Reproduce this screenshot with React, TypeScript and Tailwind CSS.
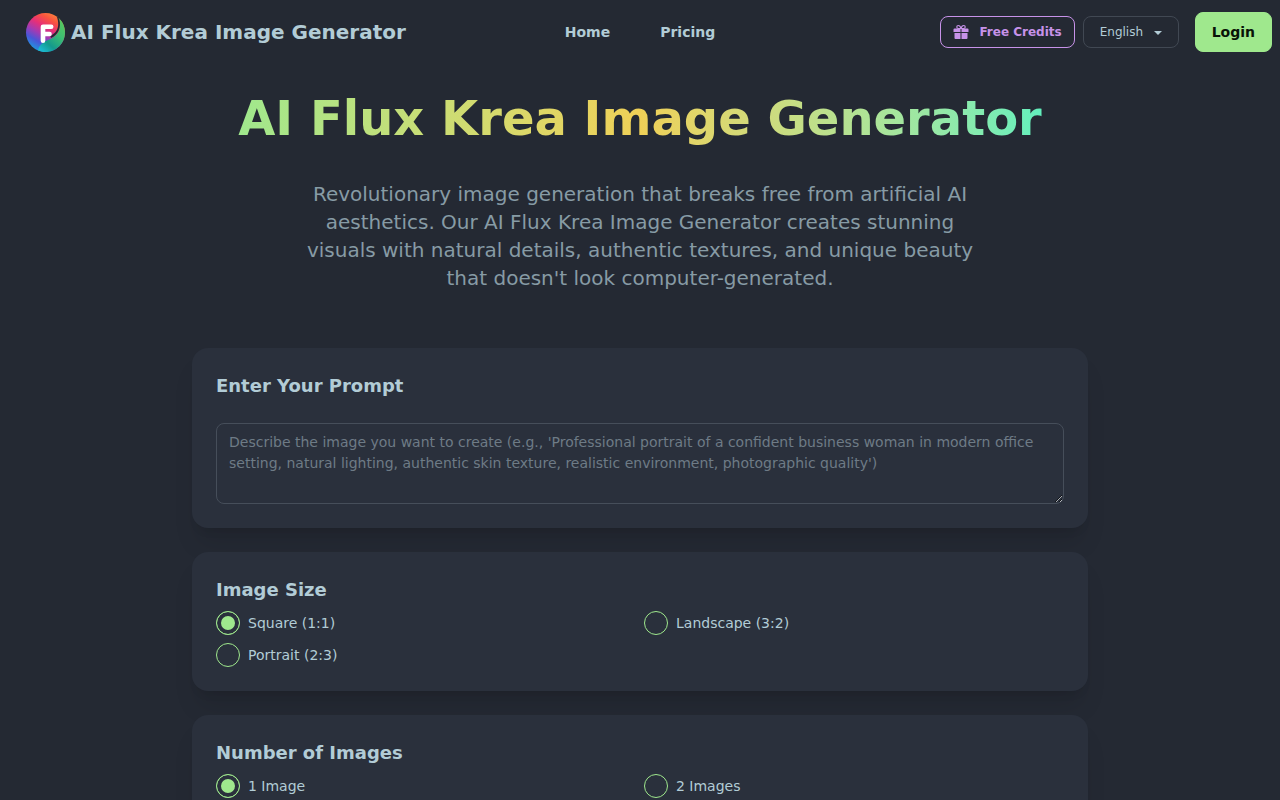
import { useState } from "react";

type Option = { value: string; label: string };

const SIZES: Option[] = [
  { value: "1:1", label: "Square (1:1)" },
  { value: "3:2", label: "Landscape (3:2)" },
  { value: "2:3", label: "Portrait (2:3)" },
];

const COUNTS: Option[] = [
  { value: "1", label: "1 Image" },
  { value: "2", label: "2 Images" },
];

const PLACEHOLDER =
  "Describe the image you want to create (e.g., 'Professional portrait of a confident business woman in modern office setting, natural lighting, authentic skin texture, realistic environment, photographic quality')";

function Logo() {
  return (
    <svg viewBox="0 0 40 40" className="size-10" aria-hidden="true">
      <defs>
        <linearGradient id="warm" x1="0.85" y1="0.05" x2="0.3" y2="1">
          <stop offset="0" stopColor="#fb8a3c" />
          <stop offset="0.2" stopColor="#f9533f" />
          <stop offset="0.4" stopColor="#e62f78" />
          <stop offset="0.6" stopColor="#a13bb4" />
          <stop offset="0.78" stopColor="#4a55d8" />
          <stop offset="1" stopColor="#1d9be0" />
        </linearGradient>
        <linearGradient id="cool" x1="0.9" y1="0" x2="0.2" y2="1">
          <stop offset="0" stopColor="#5ccb5a" />
          <stop offset="0.4" stopColor="#3dbd72" />
          <stop offset="0.75" stopColor="#149a8c" />
          <stop offset="1" stopColor="#1bb8cf" />
        </linearGradient>
      </defs>
      <circle cx="20.500" cy="20.500" r="19.500" fill="url(#warm)" />
      {/* green leaf hugging the right edge */}
      <path
        d="M33.500 6C38 9.500 40 15 40 20.500 40 31.500 31 40 20.500 40c-3 0-5.500-.6-7.500-1.500 1-5 4-8 9-10 8-3 13-8 13-15 0-3-.4-5.500-1.500-7.500z"
        fill="url(#cool)"
      />
      {/* gap between the two halves */}
      <path d="M31.500 4.200c1.500.8 2.300 1.800 2.800 3.300 2.200 8-1.300 15.500-8.300 18.500l-.5-2c5.500-3 7.700-7 7.700-12 0-3-.5-5.500-1.700-7.800z" fill="#242933" />
      <path
        d="M18 28.800V14.800h8.200M18 22h6.500"
        fill="none"
        stroke="#fff"
        strokeWidth="4.600"
        strokeLinecap="round"
        strokeLinejoin="round"
      />
    </svg>
  );
}

function GiftIcon() {
  return (
    <svg viewBox="0 0 16 16" className="size-4" fill="currentColor" aria-hidden="true">
      <path
        d="M8 4.500C7.500 2.500 6.500 1.500 5.300 1.500a1.500 1.500 0 0 0 0 3zm0 0c.5-2 1.500-3 2.700-3a1.500 1.500 0 0 1 0 3z"
        fill="none"
        stroke="currentColor"
        strokeWidth="1.200"
      />
      <path d="M1.500 4.500h6v3.500h-7v-2.500a1 1 0 0 1 1-1zM8.500 4.500h6a1 1 0 0 1 1 1v2.500h-7zM1.500 9h6v6h-5a1 1 0 0 1-1-1zM8.500 9h6v5a1 1 0 0 1-1 1h-5z" />
    </svg>
  );
}

function Header() {
  return (
    <header className="flex h-16 items-center px-2">
      <div className="flex flex-1 items-center">
        <a href="#" className="flex items-center gap-1.5 border border-transparent px-4 text-xl font-bold">
          <Logo />
          AI Flux Krea Image Generator
        </a>
      </div>
      <nav className="flex gap-[50px] text-sm font-semibold">
        <a href="#home">Home</a>
        <a href="#pricing">Pricing</a>
      </nav>
      <div className="flex flex-1 items-center justify-end">
        <button
          type="button"
          className="flex h-8 items-center gap-2.5 rounded-lg border border-[#c792e9] px-3 text-xs font-semibold text-[#c792e9]"
        >
          <GiftIcon />
          Free Credits
        </button>
        <div className="relative ml-2">
          <select
            aria-label="Language"
            defaultValue="en"
            className="h-8 w-24 appearance-none rounded-lg border border-[#414853] bg-[#242933] pr-8 pl-4 text-xs"
          >
            <option value="en">English</option>
            <option value="zh">中文</option>
          </select>
          <svg
            viewBox="0 0 8 4"
            className="pointer-events-none absolute top-[15px] right-[17px] h-1 w-2"
            fill="currentColor"
            aria-hidden="true"
          >
            <path d="M0 0h8L4 4z" />
          </svg>
        </div>
        <button
          type="button"
          className="ml-4 h-10 rounded-lg border border-[#9fe88d] bg-[#9fe88d] px-4 text-sm font-bold text-[#091307]"
        >
          Login
        </button>
      </div>
    </header>
  );
}

function Card({ children }: { children: React.ReactNode }) {
  return <section className="rounded-2xl bg-[#2a303c] p-6 shadow-xl">{children}</section>;
}

function RadioCard({ title, name, options }: { title: string; name: string; options: Option[] }) {
  const [value, setValue] = useState(options[0].value);

  return (
    <Card>
      <fieldset>
        <legend className="text-lg leading-[27px] font-semibold">{title}</legend>
        <div className="mt-2 grid grid-cols-2 gap-2">
          {options.map((option) => (
            <label key={option.value} className="flex cursor-pointer items-center gap-2 text-sm">
              <input
                type="radio"
                name={name}
                value={option.value}
                checked={value === option.value}
                onChange={() => setValue(option.value)}
                className="size-6 appearance-none rounded-full border border-[#9fe88d] checked:bg-[#9fe88d] checked:shadow-[inset_0_0_0_4px_#2a303c]"
              />
              {option.label}
            </label>
          ))}
        </div>
      </fieldset>
    </Card>
  );
}

export default function App() {
  const [prompt, setPrompt] = useState("");

  return (
    <div className="min-h-screen bg-[#242933] font-['DejaVu_Sans',sans-serif] text-[#b2ccd6]">
      <Header />
      <main className="mx-auto max-w-4xl pt-6 pb-6">
        <div className="text-center">
          <h1 className="inline-block bg-linear-to-r from-[#9fe88d] via-[#efd057] to-[#62efbd] bg-clip-text text-5xl leading-[60px] font-bold text-transparent">
            AI Flux Krea Image Generator
          </h1>
          <p className="mx-auto mt-8 max-w-2xl text-xl text-[#879ba5]">
            Revolutionary image generation that breaks free from artificial AI aesthetics. Our AI Flux Krea Image
            Generator creates stunning visuals with natural details, authentic textures, and unique beauty that doesn't
            look computer-generated.
          </p>
        </div>

        <div className="mt-14 flex flex-col gap-6">
          <Card>
            <label htmlFor="prompt" className="block text-lg leading-[27px] font-semibold">
              Enter Your Prompt
            </label>
            <textarea
              id="prompt"
              value={prompt}
              onChange={(e) => setPrompt(e.target.value)}
              placeholder={PLACEHOLDER}
              className="mt-6 block h-[81px] w-full rounded-lg border border-[#464e5a] bg-transparent px-3 py-2 text-sm leading-[21px] placeholder:text-[#6e7b86]"
            />
          </Card>
          <RadioCard title="Image Size" name="size" options={SIZES} />
          <RadioCard title="Number of Images" name="count" options={COUNTS} />
        </div>
      </main>
    </div>
  );
}
